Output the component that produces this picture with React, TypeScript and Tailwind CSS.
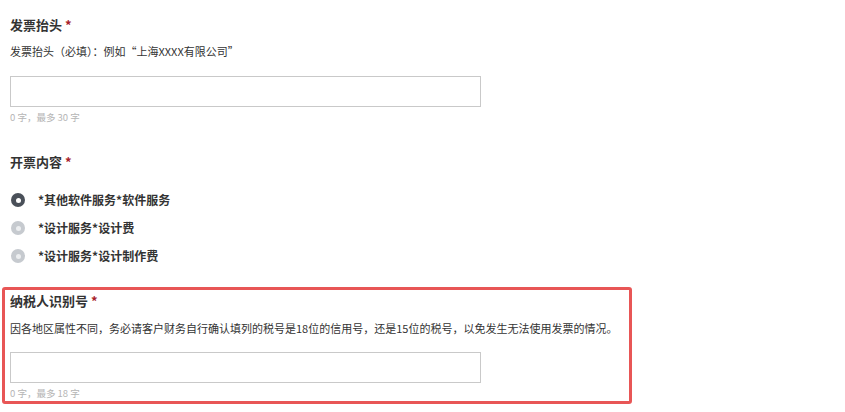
import { useState } from 'react';

const FONT = { fontFamily: '"Noto Sans CJK SC", "Noto Sans", sans-serif' };

const OPTIONS = ['*其他软件服务*软件服务', '*设计服务*设计费', '*设计服务*设计制作费'];

function Label({ text }: { text: string }) {
  return (
    <div className="text-[13px] leading-[20px] font-bold text-[#333]">
      {text} <span className="text-[#a8232a]">*</span>
    </div>
  );
}

function Field({ max, value, onChange }: { max: number; value: string; onChange: (v: string) => void }) {
  return (
    <>
      <input
        value={value}
        maxLength={max}
        onChange={(e) => onChange(e.target.value)}
        className="block w-[471px] h-[31px] border border-[#c9c9c9] bg-white px-2 text-[12px] outline-none"
      />
      <div className="mt-[4px] text-[9.5px] leading-[12px] text-[#b5b5b5]">
        {value.length} 字，最多 {max} 字
      </div>
    </>
  );
}

export default function App() {
  const [title, setTitle] = useState('');
  const [taxId, setTaxId] = useState('');
  const [picked, setPicked] = useState(0);

  return (
    <div className="w-[845px] h-[412px] bg-white pt-[15px] overflow-hidden" style={FONT}>
      <div className="pl-[10px]">
        <Label text="发票抬头" />
        <div className="mt-[8px] text-[11px] leading-[16px] text-[#333]">发票抬头（必填）：例如“上海XXXX有限公司”</div>
        <div className="mt-[17px]">
          <Field max={30} value={title} onChange={setTitle} />
        </div>

        <div className="mt-[29px]">
          <Label text="开票内容" />
        </div>
        <div className="mt-[18px] flex flex-col gap-[8px]">
          {OPTIONS.map((opt, i) => (
            <label key={opt} className="flex items-center h-[20px] cursor-pointer" onClick={() => setPicked(i)}>
              <span
                className={`flex items-center justify-center w-[14px] h-[14px] rounded-full ml-[1px] ${
                  picked === i ? 'bg-[#4a5059]' : 'bg-[#c6cacf]'
                }`}
              >
                <span className={`w-[5px] h-[5px] rounded-full ${picked === i ? 'bg-white' : 'bg-[#eceef0]'}`} />
              </span>
              <span className="ml-[13px] text-[12px] font-bold text-[#333]">{opt}</span>
            </label>
          ))}
        </div>
      </div>

      <div className="mt-[21px] ml-[2px] w-[630px] border-[3px] border-[#e85656] rounded-[3px] pl-[5px] pt-[1px] pb-[2px]">
        <Label text="纳税人识别号" />
        <div className="mt-[9px] text-[11px] leading-[16px] text-[#333]">
          因各地区属性不同，务必请客户财务自行确认填列的税号是18位的信用号，还是15位的税号，以免发生无法使用发票的情况。
        </div>
        <div className="mt-[16px]">
          <Field max={18} value={taxId} onChange={setTaxId} />
        </div>
      </div>
    </div>
  );
}
